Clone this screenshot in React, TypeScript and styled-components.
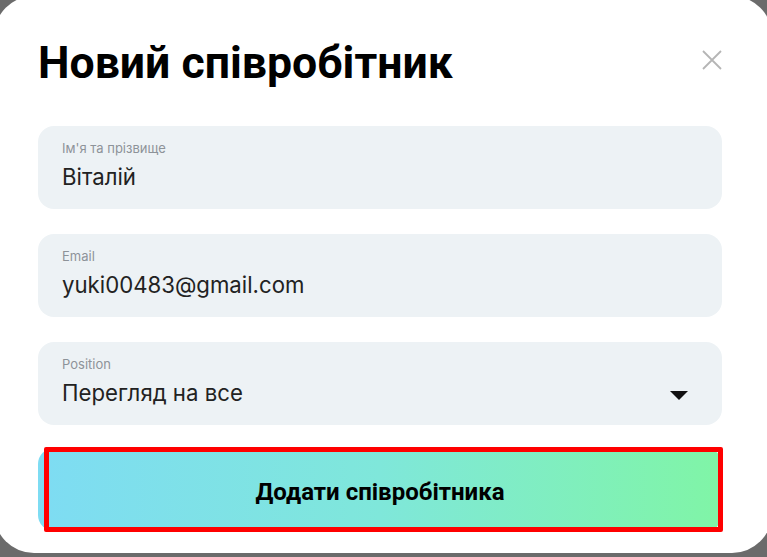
import React from 'react';
import styled, { createGlobalStyle } from 'styled-components';

const GlobalStyle = createGlobalStyle`
  html, body {
    margin: 0;
    padding: 0;
    background: #6b6b6b;
    overflow: hidden;
  }
  * {
    box-sizing: border-box;
  }
`;

const Backdrop = styled.div`
  width: 767px;
  height: 557px;
  overflow: hidden;
`;

const Modal = styled.div`
  margin: -4px 0 0 -6px;
  width: 778px;
  height: 557px;
  background: #ffffff;
  border-radius: 40px;
  padding: 39px 50px 0 44px;
  display: flex;
  flex-direction: column;
`;

const Header = styled.div`
  display: flex;
  align-items: center;
  justify-content: space-between;
  height: 56px;
  margin-bottom: 35px;
`;

const Title = styled.h1`
  margin: 0;
  font-family: Roboto, 'Liberation Sans', Arial, sans-serif;
  font-weight: 700;
  font-size: 44.6px;
  color: #000;
`;

const CloseButton = styled.button`
  border: none;
  background: none;
  padding: 0;
  width: 20px;
  height: 20px;
  margin-top: -6px;
  cursor: pointer;
  display: flex;
`;

const Form = styled.div`
  display: flex;
  flex-direction: column;
  gap: 25px;
  width: 684px;
`;

const Field = styled.div`
  height: 83px;
  border-radius: 16px;
  background: #edf2f5;
  padding: 14px 24px 0 24px;
  display: flex;
  align-items: center;
  gap: 12px;
`;

const FieldBody = styled.div`
  flex: 1;
  display: flex;
  flex-direction: column;
  align-self: flex-start;
`;

const Label = styled.span`
  font-family: Inter, 'Noto Sans', sans-serif;
  font-size: 13px;
  line-height: 16px;
  color: #8d9399;
`;

const Value = styled.span`
  margin-top: 7px;
  font-family: Inter, 'Noto Sans', sans-serif;
  font-size: 22.2px;
  line-height: 28px;
  color: #222;
`;

const Caret = styled.span`
  width: 0;
  height: 0;
  border-left: 9px solid transparent;
  border-right: 9px solid transparent;
  border-top: 9px solid #111;
  margin: 10px 10px 0 0;
`;

const SubmitButton = styled.button`
  position: relative;
  margin-top: -2px;
  height: 83px;
  border: none;
  border-radius: 16px;
  background: linear-gradient(90deg, #7edcf3 0%, #7fe7da 50%, #80f5a6 100%);
  font-family: Roboto, 'Liberation Sans', Arial, sans-serif;
  font-weight: 700;
  font-size: 24px;
  padding: 4px 0 0 0;
  color: #000;
  cursor: pointer;

  &::after {
    content: '';
    position: absolute;
    left: 6px;
    right: -1px;
    top: -1px;
    bottom: -1px;
    border: 5px solid #ff0000;
    border-radius: 2px;
  }
`;

const CloseIcon = () => (
  <svg width="20" height="20" viewBox="0 0 20 20" fill="none">
    <path d="M1 1L19 19M19 1L1 19" stroke="#b5b5b5" strokeWidth="1.8" />
  </svg>
);

const fields = [
  { label: "Ім'я та прізвище", value: 'Віталій' },
  { label: 'Email', value: 'yuki00483@gmail.com' },
  { label: 'Position', value: 'Перегляд на все', select: true },
];

const App: React.FC = () => {
  return (
    <>
      <GlobalStyle />
      <Backdrop>
        <Modal>
          <Header>
            <Title>Новий співробітник</Title>
            <CloseButton aria-label="close">
              <CloseIcon />
            </CloseButton>
          </Header>
          <Form>
            {fields.map((f) => (
              <Field key={f.label}>
                <FieldBody>
                  <Label>{f.label}</Label>
                  <Value>{f.value}</Value>
                </FieldBody>
                {f.select && <Caret />}
              </Field>
            ))}
            <SubmitButton>Додати співробітника</SubmitButton>
          </Form>
        </Modal>
      </Backdrop>
    </>
  );
};

export default App;
